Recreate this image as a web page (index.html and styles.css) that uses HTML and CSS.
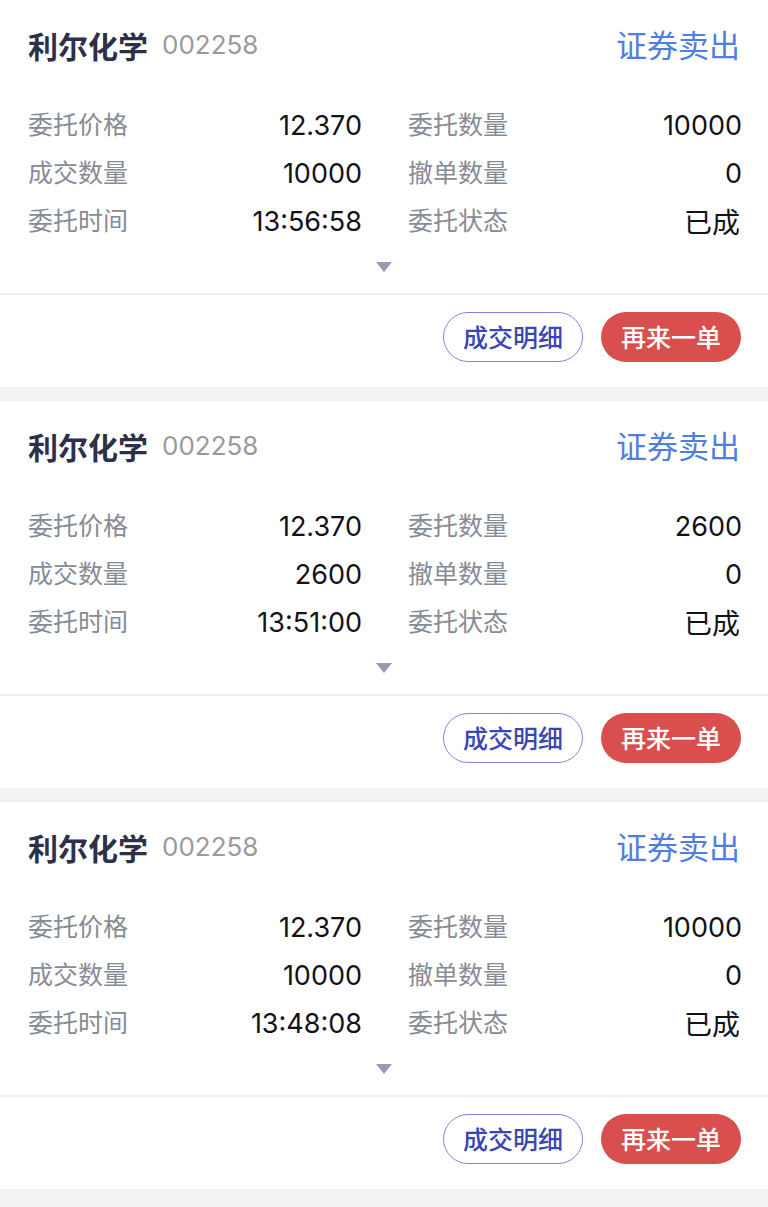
FILE: index.html
```html
<!DOCTYPE html>
<html lang="zh-CN">
<head>
<meta charset="utf-8">
<link rel="stylesheet" href="styles.css">
</head>
<body>
<div class="list">
  <div class="card">
    <div class="head">
      <div class="name"><span class="title">利尔化学</span><span class="code">002258</span></div>
      <div class="kind">证券卖出</div>
    </div>
    <div class="grid">
      <div class="row"><span class="label">委托价格</span><span class="val">12.370</span></div>
      <div class="row"><span class="label">委托数量</span><span class="val">10000</span></div>
      <div class="row"><span class="label">成交数量</span><span class="val">10000</span></div>
      <div class="row"><span class="label">撤单数量</span><span class="val">0</span></div>
      <div class="row"><span class="label">委托时间</span><span class="val">13:56:58</span></div>
      <div class="row"><span class="label">委托状态</span><span class="val cjk">已成</span></div>
    </div>
    <div class="toggle"><span class="tri"></span></div>
    <div class="foot">
      <span class="btn outline">成交明细</span>
      <span class="btn solid">再来一单</span>
    </div>
  </div>
  <div class="card">
    <div class="head">
      <div class="name"><span class="title">利尔化学</span><span class="code">002258</span></div>
      <div class="kind">证券卖出</div>
    </div>
    <div class="grid">
      <div class="row"><span class="label">委托价格</span><span class="val">12.370</span></div>
      <div class="row"><span class="label">委托数量</span><span class="val">2600</span></div>
      <div class="row"><span class="label">成交数量</span><span class="val">2600</span></div>
      <div class="row"><span class="label">撤单数量</span><span class="val">0</span></div>
      <div class="row"><span class="label">委托时间</span><span class="val">13:51:00</span></div>
      <div class="row"><span class="label">委托状态</span><span class="val cjk">已成</span></div>
    </div>
    <div class="toggle"><span class="tri"></span></div>
    <div class="foot">
      <span class="btn outline">成交明细</span>
      <span class="btn solid">再来一单</span>
    </div>
  </div>
  <div class="card">
    <div class="head">
      <div class="name"><span class="title">利尔化学</span><span class="code">002258</span></div>
      <div class="kind">证券卖出</div>
    </div>
    <div class="grid">
      <div class="row"><span class="label">委托价格</span><span class="val">12.370</span></div>
      <div class="row"><span class="label">委托数量</span><span class="val">10000</span></div>
      <div class="row"><span class="label">成交数量</span><span class="val">10000</span></div>
      <div class="row"><span class="label">撤单数量</span><span class="val">0</span></div>
      <div class="row"><span class="label">委托时间</span><span class="val">13:48:08</span></div>
      <div class="row"><span class="label">委托状态</span><span class="val cjk">已成</span></div>
    </div>
    <div class="toggle"><span class="tri"></span></div>
    <div class="foot">
      <span class="btn outline">成交明细</span>
      <span class="btn solid">再来一单</span>
    </div>
  </div>
</div>
</body>
</html>
```
FILE: styles.css
```css
* { box-sizing: border-box; }
html, body { margin: 0; padding: 0; }
body {
  background: #f2f2f2;
  font-family: "Noto Sans CJK SC", "Noto Sans", sans-serif;
  width: 768px;
  height: 1207px;
  overflow: hidden;
}
.list { display: flex; flex-direction: column; gap: 14px; }
.card {
  background: #fff;
  height: 387px;
  display: flex;
  flex-direction: column;
}
.head {
  display: flex;
  justify-content: space-between;
  align-items: center;
  height: 42px;
  margin-top: 24px;
  padding: 0 28px 0 28px;
}
.name { display: flex; align-items: center; gap: 14px; }
.title {
  font-size: 30px;
  font-weight: 700;
  color: #2c3149;
  line-height: 42px;
}
.code {
  font-family: Inter, "Liberation Sans", sans-serif;
  font-size: 26px;
  color: #9a9a9a;
  line-height: 42px;
}
.kind {
  font-size: 31px;
  color: #4f7de3;
  line-height: 42px;
  padding-bottom: 3px;
}
.grid {
  display: grid;
  grid-template-columns: 332px 332px;
  column-gap: 48px;
  padding: 0 28px;
  margin-top: 35px;
}
.row {
  display: flex;
  justify-content: space-between;
  align-items: center;
  height: 48px;
}
.label {
  font-size: 25px;
  color: #878b94;
  line-height: 48px;
  padding-bottom: 4px;
}
.val {
  font-family: Inter, "Liberation Sans", sans-serif;
  font-size: 27px;
  color: #111318;
  line-height: 48px;
  padding-top: 2px;
  margin-right: -2px;
}
.val.cjk {
  font-family: "Noto Sans CJK SC", sans-serif;
  font-size: 28px;
  padding-top: 0;
  margin-right: 0;
}
.toggle {
  height: 50px;
  display: flex;
  justify-content: center;
  align-items: flex-start;
  padding-top: 17px;
  border-bottom: 2px solid #f0f0f0;
}
.tri {
  width: 0;
  height: 0;
  border-left: 8px solid transparent;
  border-right: 8px solid transparent;
  border-top: 10px solid #959cb4;
}
.foot {
  display: flex;
  justify-content: flex-end;
  gap: 18px;
  padding: 17px 27px 0 0;
}
.btn {
  width: 140px;
  height: 50px;
  border-radius: 25px;
  display: flex;
  align-items: center;
  justify-content: center;
  font-size: 25px;
  font-weight: 500;
  padding-bottom: 3px;
}
.outline {
  border: 1.5px solid #7f88d6;
  color: #3b45b3;
  background: #fff;
}
.solid {
  background: #d84f4d;
  color: #fff;
}
```
